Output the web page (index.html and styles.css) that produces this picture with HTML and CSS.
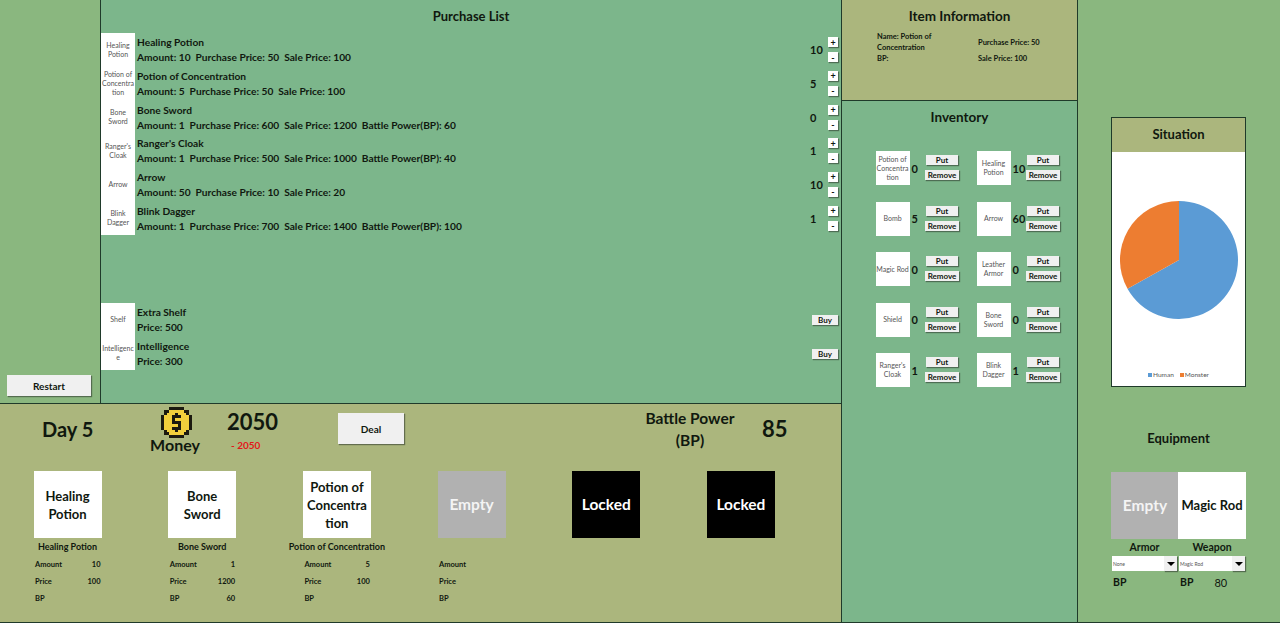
FILE: index.html
```html
<!DOCTYPE html>
<html lang="en">
<head>
    <meta charset="UTF-8">
    <meta name="viewport" content="width=device-width, initial-scale=1.0">
    <title>Shop Game</title>
    <link rel="stylesheet" href="styles.css">
</head>
<body>
    <div class="app">
        <div class="main">
            <div class="upper">
                <div class="sidebar">
                    <button class="button restart">Restart</button>
                </div>
                <div class="purchase">
                    <div class="purchase-title">Purchase List</div>

                    <div class="list-row">
                        <div class="thumb">Healing Potion</div>
                        <div class="row-info">
                            <div>Healing Potion</div>
                            <div>Amount: 10&nbsp; Purchase Price: 50&nbsp; Sale Price: 100</div>
                        </div>
                        <div class="row-count">10</div>
                        <div class="stepper"><button class="button step">+</button><button class="button step">-</button></div>
                    </div>
                    <div class="list-row">
                        <div class="thumb">Potion of Concentra tion</div>
                        <div class="row-info">
                            <div>Potion of Concentration</div>
                            <div>Amount: 5&nbsp; Purchase Price: 50&nbsp; Sale Price: 100</div>
                        </div>
                        <div class="row-count">5</div>
                        <div class="stepper"><button class="button step">+</button><button class="button step">-</button></div>
                    </div>
                    <div class="list-row">
                        <div class="thumb">Bone Sword</div>
                        <div class="row-info">
                            <div>Bone Sword</div>
                            <div>Amount: 1&nbsp; Purchase Price: 600&nbsp; Sale Price: 1200&nbsp; Battle Power(BP): 60</div>
                        </div>
                        <div class="row-count">0</div>
                        <div class="stepper"><button class="button step">+</button><button class="button step">-</button></div>
                    </div>
                    <div class="list-row">
                        <div class="thumb">Ranger's Cloak</div>
                        <div class="row-info">
                            <div>Ranger's Cloak</div>
                            <div>Amount: 1&nbsp; Purchase Price: 500&nbsp; Sale Price: 1000&nbsp; Battle Power(BP): 40</div>
                        </div>
                        <div class="row-count">1</div>
                        <div class="stepper"><button class="button step">+</button><button class="button step">-</button></div>
                    </div>
                    <div class="list-row">
                        <div class="thumb">Arrow</div>
                        <div class="row-info">
                            <div>Arrow</div>
                            <div>Amount: 50&nbsp; Purchase Price: 10&nbsp; Sale Price: 20</div>
                        </div>
                        <div class="row-count">10</div>
                        <div class="stepper"><button class="button step">+</button><button class="button step">-</button></div>
                    </div>
                    <div class="list-row">
                        <div class="thumb">Blink Dagger</div>
                        <div class="row-info">
                            <div>Blink Dagger</div>
                            <div>Amount: 1&nbsp; Purchase Price: 700&nbsp; Sale Price: 1400&nbsp; Battle Power(BP): 100</div>
                        </div>
                        <div class="row-count">1</div>
                        <div class="stepper"><button class="button step">+</button><button class="button step">-</button></div>
                    </div>

                    <div class="list-row upgrade-first">
                        <div class="thumb">Shelf</div>
                        <div class="row-info">
                            <div>Extra Shelf</div>
                            <div>Price: 500</div>
                        </div>
                        <button class="button buy">Buy</button>
                    </div>
                    <div class="list-row">
                        <div class="thumb">Intelligenc e</div>
                        <div class="row-info">
                            <div>Intelligence</div>
                            <div>Price: 300</div>
                        </div>
                        <button class="button buy">Buy</button>
                    </div>
                </div>
            </div>

            <div class="deal-panel">
                <div class="status">
                    <div class="day">Day 5</div>
                    <div class="money">
                        <svg class="coin" viewBox="0 0 11 11" shape-rendering="crispEdges">
                            <path fill="#1c1a10" d="M3 0h5v1h2v2h1v5h-1v2H8v1H3v-1H1V8H0V3h1V1h2z"/>
                            <path fill="#f2cf3c" d="M3 1h5v1h1v1h1v5H9v1H8v1H3V9H2V8H1V3h1V2h1z"/>
                            <path fill="#1c1a10" d="M5 2h1v1h1v1H5v1h2v3H6v1H5V8H4V7h2V6H4V3h1z"/>
                        </svg>
                        <div class="money-label">Money</div>
                    </div>
                    <div class="funds">
                        <div class="funds-value">2050</div>
                        <div class="funds-change">- 2050</div>
                    </div>
                    <button class="button deal">Deal</button>
                    <div class="power-label">Battle Power<br>(BP)</div>
                    <div class="power-value">85</div>
                </div>

                <div class="shelves">
                    <div class="shelf">
                        <div class="slot">Healing Potion</div>
                        <div class="shelf-name">Healing Potion</div>
                        <div class="stat"><span>Amount</span><span>10</span></div>
                        <div class="stat"><span>Price</span><span>100</span></div>
                        <div class="stat"><span>BP</span></div>
                    </div>
                    <div class="shelf">
                        <div class="slot">Bone Sword</div>
                        <div class="shelf-name">Bone Sword</div>
                        <div class="stat"><span>Amount</span><span>1</span></div>
                        <div class="stat"><span>Price</span><span>1200</span></div>
                        <div class="stat"><span>BP</span><span>60</span></div>
                    </div>
                    <div class="shelf">
                        <div class="slot">Potion of Concentra tion</div>
                        <div class="shelf-name">Potion of Concentration</div>
                        <div class="stat"><span>Amount</span><span>5</span></div>
                        <div class="stat"><span>Price</span><span>100</span></div>
                        <div class="stat"><span>BP</span></div>
                    </div>
                    <div class="shelf">
                        <div class="slot slot-empty">Empty</div>
                        <div class="shelf-name">&nbsp;</div>
                        <div class="stat"><span>Amount</span></div>
                        <div class="stat"><span>Price</span></div>
                        <div class="stat"><span>BP</span></div>
                    </div>
                    <div class="shelf">
                        <div class="slot slot-locked">Locked</div>
                    </div>
                    <div class="shelf">
                        <div class="slot slot-locked">Locked</div>
                    </div>
                </div>
            </div>
        </div>

        <div class="middle">
            <div class="item-info">
                <div class="panel-title">Item Information</div>
                <div class="info-grid">
                    <div class="info-name">Name: Potion of Concentration</div>
                    <div class="info-price">Purchase Price: 50</div>
                    <div>BP:</div>
                    <div>Sale Price: 100</div>
                </div>
            </div>
            <div class="inventory">
                <div class="panel-title">Inventory</div>
                <div class="inv-grid">
                    <div class="inv-item"><div class="inv-thumb">Potion of Concentra tion</div><div class="inv-count">0</div><div class="inv-actions"><button class="button inv-btn inv-put">Put</button><button class="button inv-btn">Remove</button></div></div>
                    <div class="inv-item"><div class="inv-thumb">Healing Potion</div><div class="inv-count">10</div><div class="inv-actions"><button class="button inv-btn inv-put">Put</button><button class="button inv-btn">Remove</button></div></div>
                    <div class="inv-item"><div class="inv-thumb">Bomb</div><div class="inv-count">5</div><div class="inv-actions"><button class="button inv-btn inv-put">Put</button><button class="button inv-btn">Remove</button></div></div>
                    <div class="inv-item"><div class="inv-thumb">Arrow</div><div class="inv-count">60</div><div class="inv-actions"><button class="button inv-btn inv-put">Put</button><button class="button inv-btn">Remove</button></div></div>
                    <div class="inv-item"><div class="inv-thumb">Magic Rod</div><div class="inv-count">0</div><div class="inv-actions"><button class="button inv-btn inv-put">Put</button><button class="button inv-btn">Remove</button></div></div>
                    <div class="inv-item"><div class="inv-thumb">Leather Armor</div><div class="inv-count">0</div><div class="inv-actions"><button class="button inv-btn inv-put">Put</button><button class="button inv-btn">Remove</button></div></div>
                    <div class="inv-item"><div class="inv-thumb">Shield</div><div class="inv-count">0</div><div class="inv-actions"><button class="button inv-btn inv-put">Put</button><button class="button inv-btn">Remove</button></div></div>
                    <div class="inv-item"><div class="inv-thumb">Bone Sword</div><div class="inv-count">0</div><div class="inv-actions"><button class="button inv-btn inv-put">Put</button><button class="button inv-btn">Remove</button></div></div>
                    <div class="inv-item"><div class="inv-thumb">Ranger's Cloak</div><div class="inv-count">1</div><div class="inv-actions"><button class="button inv-btn inv-put">Put</button><button class="button inv-btn">Remove</button></div></div>
                    <div class="inv-item"><div class="inv-thumb">Blink Dagger</div><div class="inv-count">1</div><div class="inv-actions"><button class="button inv-btn inv-put">Put</button><button class="button inv-btn">Remove</button></div></div>
                </div>
            </div>
        </div>

        <div class="right">
            <div class="situation">
                <div class="situation-title">Situation</div>
                <div class="chart">
                    <svg class="pie" viewBox="0 0 118 118">
                        <path fill="#5b9bd5" d="M59 59V0A59 59 0 1 1 7.5 87.8z"/>
                        <path fill="#ed7d31" d="M59 59L7.5 87.8A59 59 0 0 1 59 0z"/>
                    </svg>
                    <div class="legend">
                        <span class="legend-item"><i class="dot dot-human"></i>Human</span>
                        <span class="legend-item"><i class="dot dot-monster"></i>Monster</span>
                    </div>
                </div>
            </div>

            <div class="equip-title">Equipment</div>
            <div class="equip-grid">
                <div class="equip-col">
                    <div class="slot slot-empty">Empty</div>
                    <div class="equip-label">Armor</div>
                    <div class="dropdown"><span>None</span><span class="dropdown-arrow"></span></div>
                    <div class="equip-bp"><span>BP</span></div>
                </div>
                <div class="equip-col">
                    <div class="slot slot-single">Magic Rod</div>
                    <div class="equip-label">Weapon</div>
                    <div class="dropdown"><span>Magic Rod</span><span class="dropdown-arrow"></span></div>
                    <div class="equip-bp"><span>BP</span><span class="equip-bp-value">80</span></div>
                </div>
            </div>
        </div>
    </div>
</body>
</html>
```

FILE: styles.css
```css
:root {
    --green-side: #8ab77f;
    --green-panel: #7cb68b;
    --olive: #abb67d;
    --line: #1f3a2a;
    --text: #10180f;
    --button: #f0f0f0;
}

* {
    margin: 0;
    padding: 0;
    box-sizing: border-box;
    font-family: 'Lato', 'Liberation Sans', sans-serif;
}

body {
    width: 1280px;
    height: 623px;
    overflow: hidden;
    background-color: var(--green-side);
    color: var(--text);
}

.app {
    display: grid;
    grid-template-columns: 842px 236px 202px;
    height: 623px;
}

.button {
    display: flex;
    align-items: center;
    justify-content: center;
    background-color: var(--button);
    border: none;
    box-shadow: 1px 1px 1px rgba(40, 50, 40, 0.55);
    color: var(--text);
    font-weight: bold;
    cursor: pointer;
}

/* left block: purchase list and shelves */
.main {
    display: flex;
    flex-direction: column;
    border-right: 1px solid var(--line);
}

.upper {
    display: flex;
    height: 404px;
    border-bottom: 1px solid var(--line);
}

.sidebar {
    width: 101px;
    padding: 0 9px 7px 7px;
    display: flex;
    flex-direction: column;
    justify-content: flex-end;
    border-right: 1px solid var(--line);
}

.restart {
    height: 21px;
    font-size: 10px;
}

.purchase {
    flex: 1;
    background-color: var(--green-panel);
    padding-top: 9px;
}

.purchase-title {
    height: 24px;
    text-align: center;
    font-size: 13px;
    font-weight: bold;
    line-height: 15px;
}

.list-row {
    display: flex;
    align-items: center;
    height: 33.67px;
}

.upgrade-first {
    margin-top: 68px;
}

.thumb {
    width: 34px;
    height: 100%;
    display: flex;
    align-items: center;
    justify-content: center;
    background-color: white;
    color: #555;
    font-size: 7px;
    line-height: 9px;
    text-align: center;
    word-break: break-word;
}

.row-info {
    flex: 1;
    padding: 1px 0 0 2px;
    font-size: 10.2px;
    font-weight: bold;
    line-height: 15px;
}

.row-count {
    width: 13px;
    font-size: 11px;
    font-weight: bold;
}

.stepper {
    width: 10px;
    margin: 0 3px 0 5px;
    display: flex;
    flex-direction: column;
    gap: 5px;
}

.step {
    height: 10px;
    font-size: 9px;
    background-color: white;
}

.buy {
    width: 26px;
    height: 10px;
    margin: 1px 3px 0 0;
    font-size: 8px;
}

/* bottom block */
.deal-panel {
    flex: 1;
    background-color: var(--olive);
    border-bottom: 1px solid var(--line);
}

.status {
    display: grid;
    grid-template-columns: 42px 108px 77px 111px 302px 122px 1fr;
    height: 67px;
    padding-bottom: 18px;
    align-items: center;
}

.day {
    grid-column: 2;
    font-size: 20px;
    font-weight: bold;
}

.money {
    width: 50px;
    margin-top: 1px;
    display: flex;
    flex-direction: column;
    align-items: center;
}

.coin {
    width: 31px;
    height: 31px;
    margin-left: 2px;
}

.money-label {
    font-size: 16px;
    font-weight: bold;
    line-height: 14px;
}

.funds-value {
    font-size: 22px;
    font-weight: bold;
    line-height: 30px;
}

.funds-change {
    margin-top: 2px;
    padding-left: 4px;
    color: #e3171b;
    font-size: 10px;
    font-weight: bold;
}

.deal {
    width: 66px;
    height: 31px;
    font-size: 10px;
}

.power-label {
    width: 100px;
    text-align: center;
    font-size: 15.5px;
    font-weight: bold;
    line-height: 22px;
}

.power-value {
    font-size: 22px;
    font-weight: bold;
}

.shelves {
    display: flex;
    gap: 66.7px;
    padding-left: 33.5px;
}

.shelf {
    width: 68px;
    display: flex;
    flex-direction: column;
    align-items: center;
}

.slot {
    width: 68px;
    height: 67px;
    flex: none;
    display: flex;
    align-items: center;
    justify-content: center;
    background-color: white;
    font-size: 13px;
    font-weight: bold;
    line-height: 18px;
    text-align: center;
    word-break: break-word;
}

.slot-single {
    padding-bottom: 1px;
}

.slot-empty {
    padding-bottom: 1px;
    background-color: #b1b1b1;
    color: #f4f4f4;
    font-size: 15.5px;
}

.slot-locked {
    padding-bottom: 1px;
    background-color: black;
    color: white;
    font-size: 15.5px;
}

.shelf-name {
    margin-top: 1px;
    height: 17px;
    white-space: nowrap;
    font-size: 9px;
    font-weight: bold;
    line-height: 16px;
}

.stat {
    width: 100%;
    height: 17px;
    padding: 0 1px 0 1.5px;
    display: flex;
    justify-content: space-between;
    align-items: center;
    font-size: 7.5px;
    font-weight: bold;
}

/* middle column */
.middle {
    display: flex;
    flex-direction: column;
    border-right: 1px solid var(--line);
    background-color: var(--green-panel);
    border-bottom: 1px solid var(--line);
}

.item-info {
    height: 101px;
    background-color: var(--olive);
    border-bottom: 1px solid var(--line);
    padding-top: 8px;
}

.panel-title {
    text-align: center;
    font-size: 13.5px;
    font-weight: bold;
    line-height: 17px;
}

.info-grid {
    display: grid;
    grid-template-columns: 101px 1fr;
    padding: 6px 0 0 35px;
    align-items: center;
    font-size: 7.5px;
    font-weight: bold;
    line-height: 11px;
}

.info-name {
    width: 68px;
}

.inventory {
    flex: 1;
    padding-top: 8px;
}

.inv-grid {
    display: grid;
    grid-template-columns: 101px 101px;
    grid-auto-rows: 34px;
    row-gap: 16.5px;
    padding: 25px 0 0 33.5px;
}

.inv-item {
    display: flex;
    align-items: center;
}

.inv-thumb {
    width: 34px;
    height: 34px;
    display: flex;
    align-items: center;
    justify-content: center;
    background-color: white;
    color: #555;
    font-size: 7px;
    line-height: 9px;
    text-align: center;
    word-break: break-word;
}

.inv-count {
    width: 15.5px;
    padding-left: 2px;
    white-space: nowrap;
    font-size: 11px;
    font-weight: bold;
}

.inv-actions {
    width: 34px;
    margin-bottom: 1px;
    display: flex;
    flex-direction: column;
    align-items: center;
    gap: 5px;
}

.inv-btn {
    width: 34px;
    height: 10px;
    font-size: 8px;
}

.inv-put {
    width: 32px;
}

/* right column */
.right {
    padding: 117px 34px 0 33px;
    border-bottom: 1px solid var(--line);
}

.situation {
    height: 270px;
    display: flex;
    flex-direction: column;
    border: 1px solid var(--line);
}

.situation-title {
    height: 34px;
    background-color: var(--olive);
    text-align: center;
    font-size: 13px;
    font-weight: bold;
    line-height: 33px;
}

.chart {
    flex: 1;
    background-color: white;
    display: flex;
    flex-direction: column;
    align-items: center;
    padding-top: 49px;
}

.pie {
    width: 118px;
    height: 118px;
}

.legend {
    margin-top: 51px;
    display: flex;
    gap: 6px;
    color: #555;
    font-size: 6.5px;
    line-height: 9px;
}

.legend-item {
    display: flex;
    align-items: center;
    gap: 1px;
}

.dot {
    width: 4px;
    height: 4px;
}

.dot-human {
    background-color: #5b9bd5;
}

.dot-monster {
    background-color: #ed7d31;
}

.equip-title {
    margin-top: 43px;
    text-align: center;
    font-size: 13px;
    font-weight: bold;
    line-height: 16px;
}

.equip-grid {
    margin-top: 26px;
    display: grid;
    grid-template-columns: 67px 68px;
}

.equip-label {
    margin-top: 1px;
    text-align: center;
    font-size: 10.5px;
    font-weight: bold;
    line-height: 15px;
}

.dropdown {
    height: 15px;
    margin: 1px 1px 0;
    display: flex;
    align-items: center;
    justify-content: space-between;
    padding-left: 1px;
    background-color: white;
    color: #555;
    font-size: 5px;
}

.dropdown-arrow {
    width: 13px;
    height: 15px;
    display: flex;
    align-items: center;
    justify-content: center;
    background-color: #f0f0f0;
    box-shadow: 1px 1px 1px rgba(40, 50, 40, 0.55);
}

.dropdown-arrow::after {
    content: "";
    border-left: 4px solid transparent;
    border-right: 4px solid transparent;
    border-top: 4px solid black;
}

.equip-bp {
    display: flex;
    gap: 21px;
    padding: 4px 0 0 2px;
    font-size: 10.5px;
    font-weight: bold;
    line-height: 15px;
}

.equip-bp-value {
    font-size: 11px;
    font-weight: normal;
}
```
